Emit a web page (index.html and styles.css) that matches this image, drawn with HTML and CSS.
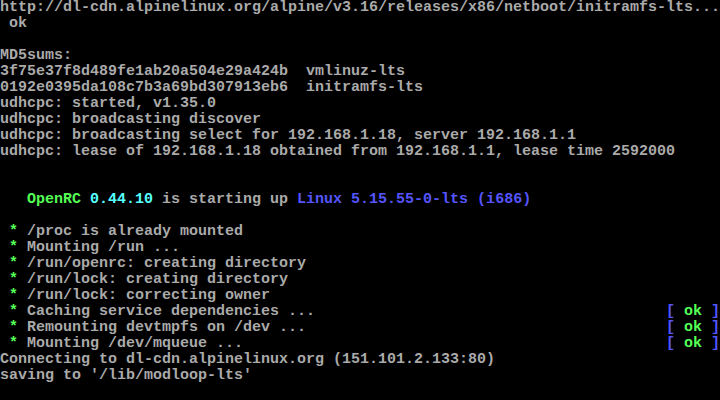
FILE: index.html
```html
<!DOCTYPE html>
<html>
<head>
<meta charset="utf-8">
<link rel="stylesheet" href="styles.css">
</head>
<body>
<div class="console">
  <div class="line">http://dl-cdn.alpinelinux.org/alpine/v3.16/releases/x86/netboot/initramfs-lts...</div>
  <div class="line"> ok</div>
  <div class="line"> </div>
  <div class="line">MD5sums:</div>
  <div class="line">3f75e37f8d489fe1ab20a504e29a424b  vmlinuz-lts</div>
  <div class="line">0192e0395da108c7b3a69bd307913eb6  initramfs-lts</div>
  <div class="line">udhcpc: started, v1.35.0</div>
  <div class="line">udhcpc: broadcasting discover</div>
  <div class="line">udhcpc: broadcasting select for 192.168.1.18, server 192.168.1.1</div>
  <div class="line">udhcpc: lease of 192.168.1.18 obtained from 192.168.1.1, lease time 2592000</div>
  <div class="line"> </div>
  <div class="line"> </div>
  <div class="line">   <span class="g">OpenRC</span> <span class="c">0.44.10</span> is starting up <span class="b">Linux 5.15.55-0-lts (i686)</span></div>
  <div class="line"> </div>
  <div class="line"> <span class="g">*</span> /proc is already mounted</div>
  <div class="line"> <span class="g">*</span> Mounting /run ...</div>
  <div class="line"> <span class="g">*</span> /run/openrc: creating directory</div>
  <div class="line"> <span class="g">*</span> /run/lock: creating directory</div>
  <div class="line"> <span class="g">*</span> /run/lock: correcting owner</div>
  <div class="line status"><span> <span class="g">*</span> Caching service dependencies ...</span><span><span class="b">[</span> <span class="g">ok</span> <span class="b">]</span></span></div>
  <div class="line status"><span> <span class="g">*</span> Remounting devtmpfs on /dev ...</span><span><span class="b">[</span> <span class="g">ok</span> <span class="b">]</span></span></div>
  <div class="line status"><span> <span class="g">*</span> Mounting /dev/mqueue ...</span><span><span class="b">[</span> <span class="g">ok</span> <span class="b">]</span></span></div>
  <div class="line">Connecting to dl-cdn.alpinelinux.org (151.101.2.133:80)</div>
  <div class="line">saving to '/lib/modloop-lts'</div>
</div>
</body>
</html>
```
FILE: styles.css
```css
html, body {
  margin: 0;
  padding: 0;
  background: #000;
}
.console {
  width: 720px;
  height: 400px;
  overflow: hidden;
  font-family: "Liberation Mono", monospace;
  font-size: 15px;
  line-height: 16px;
  font-weight: bold;
  color: #aaaaaa;
}
.line {
  height: 16px;
  white-space: pre;
}
.status {
  display: flex;
  justify-content: space-between;
}
.g { color: #55ff55; }
.c { color: #55ffff; }
.b { color: #5555ff; }
```
